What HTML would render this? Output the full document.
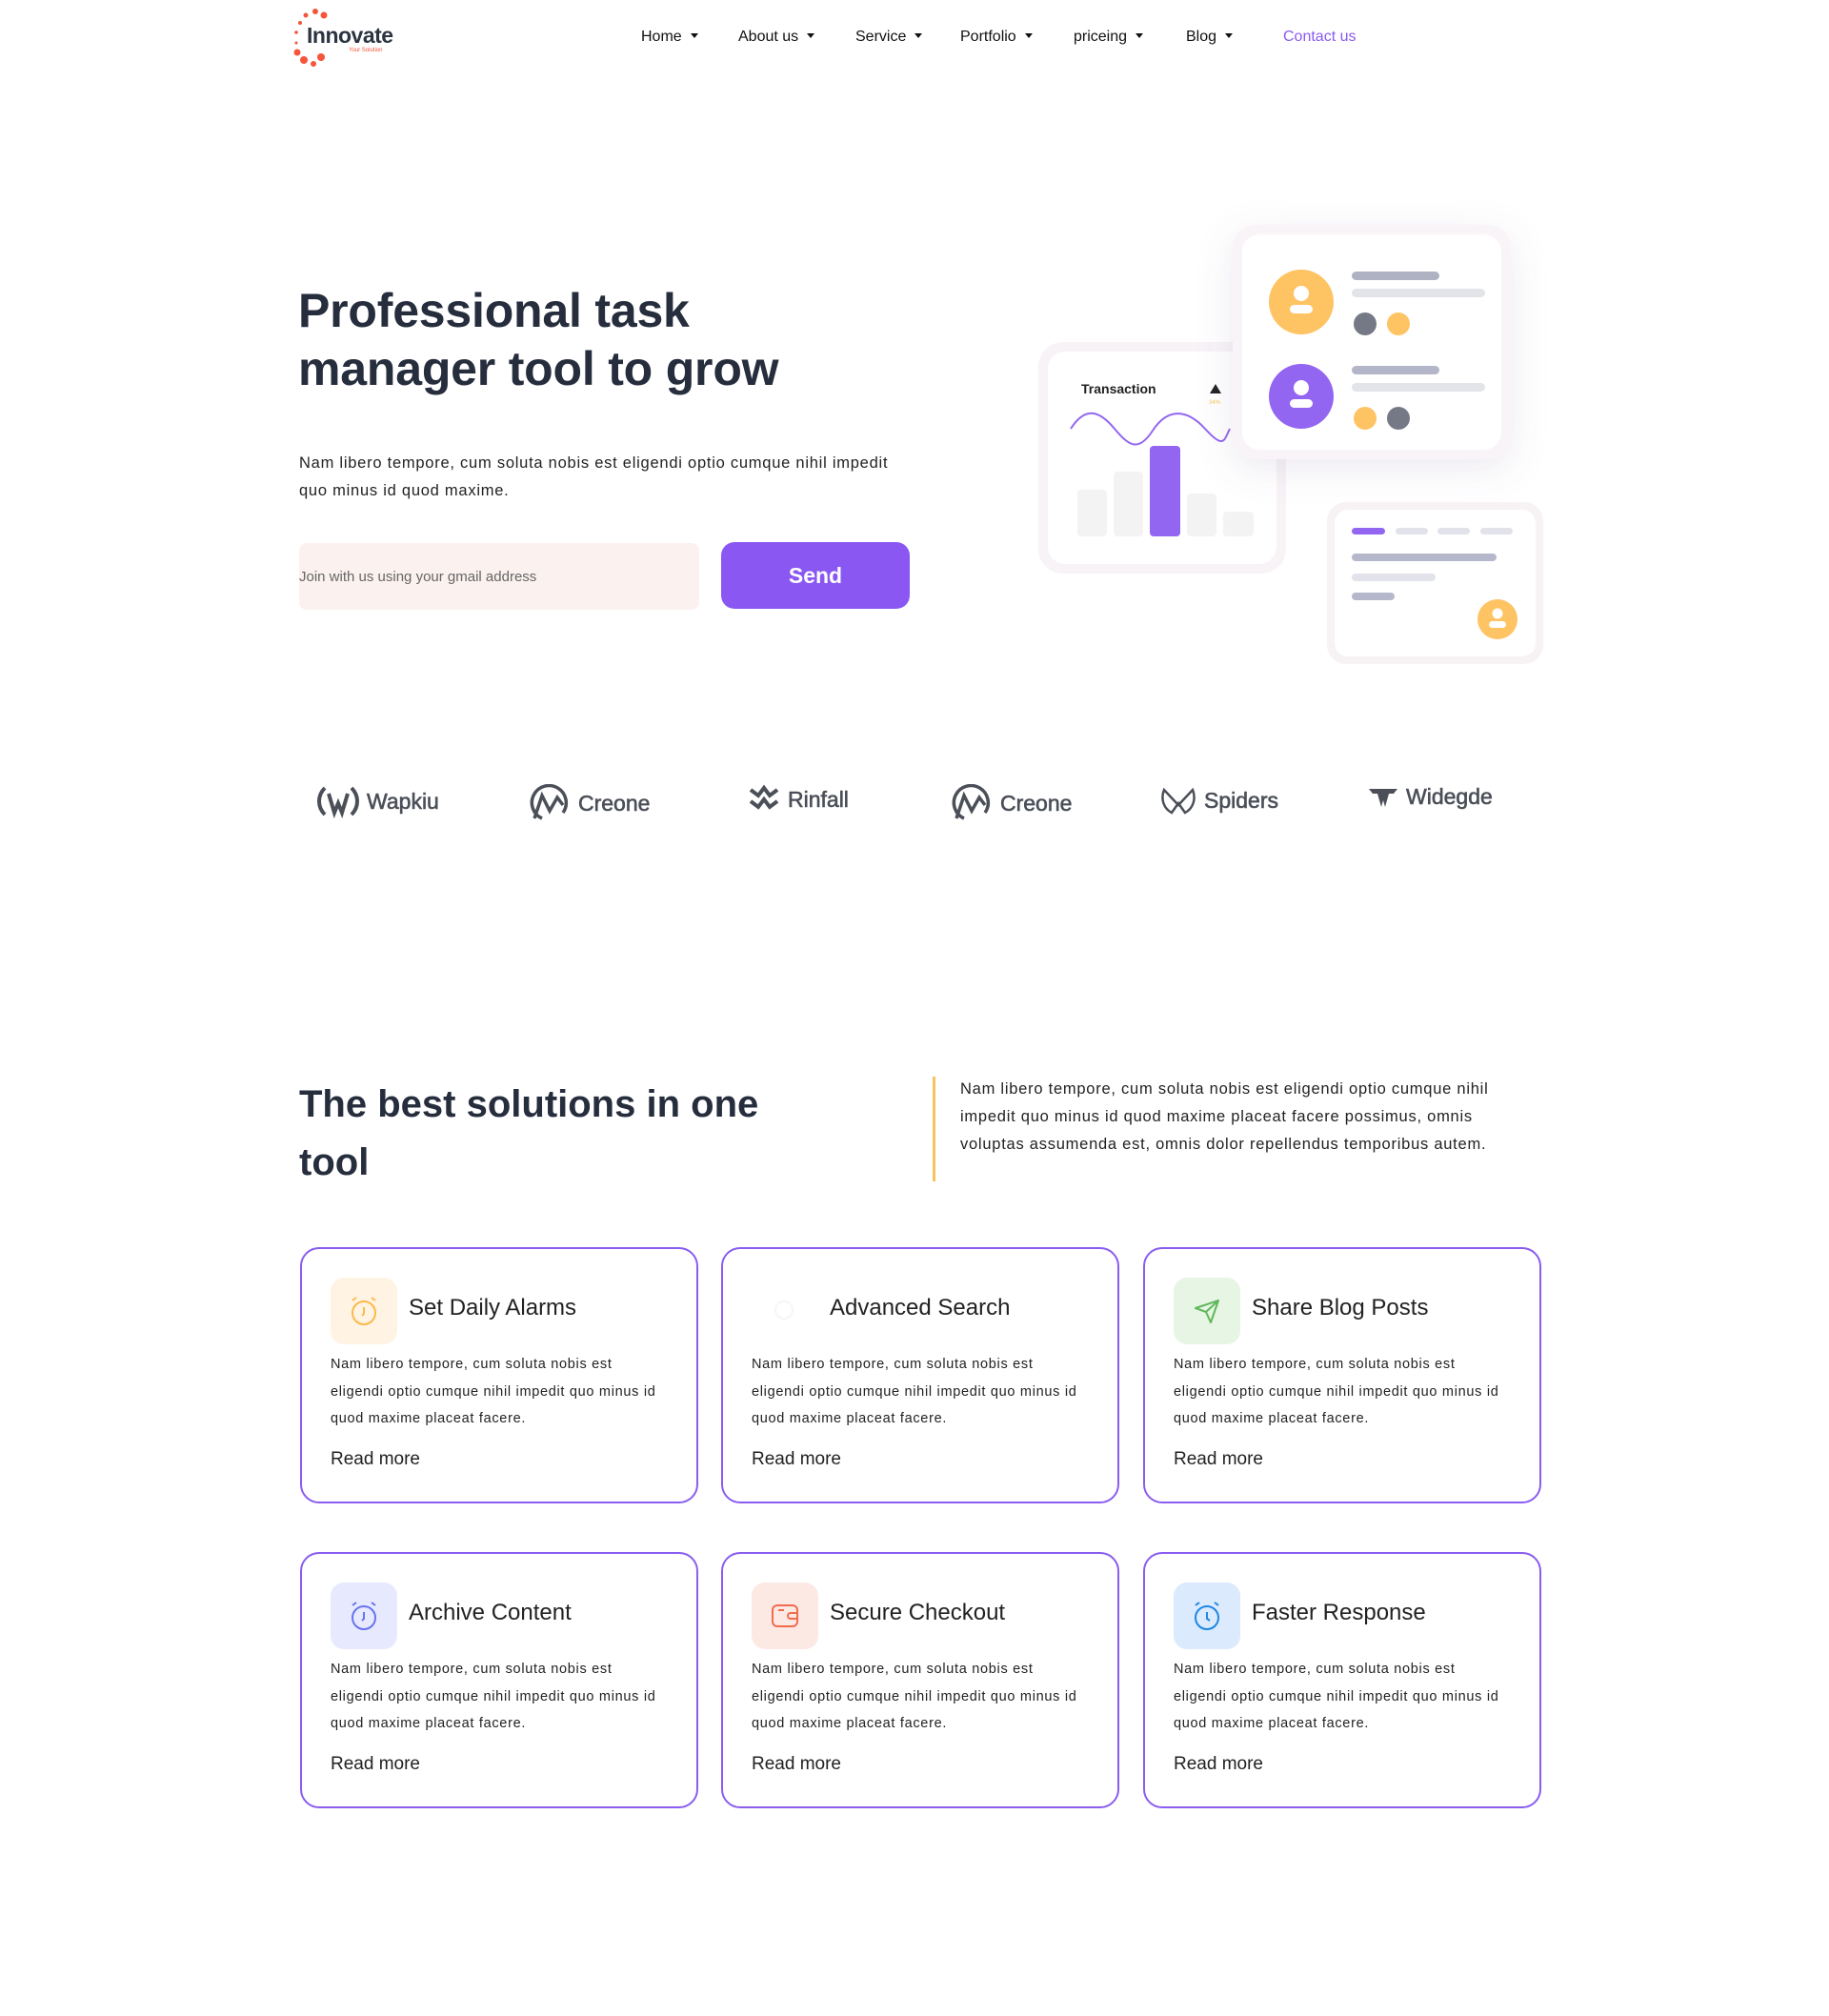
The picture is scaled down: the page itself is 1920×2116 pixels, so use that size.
<!DOCTYPE html>
<html><head><meta charset="utf-8"><style>
*{margin:0;padding:0;box-sizing:border-box}
body{width:1920px;height:2116px;background:#fff;font-family:"Liberation Sans",sans-serif;color:#262d3d;position:relative;overflow:hidden}
.a{position:absolute}
.nav{top:30px;font-size:16px;color:#111;white-space:nowrap}
.nav i{display:inline-block;width:0;height:0;border-left:4px solid transparent;border-right:4px solid transparent;border-top:5px solid #111;margin-left:9px;vertical-align:3px}
h1{position:absolute;left:313px;top:296px;font-size:50px;line-height:61px;font-weight:700;color:#262d3d;letter-spacing:-0.2px}
.p{font-size:16.5px;line-height:29px;color:#222;white-space:nowrap;letter-spacing:0.75px}
.card{position:absolute;width:418px;height:269px;border:2px solid #8a5cf0;border-radius:20px}
.ic{position:absolute;left:30px;top:30px;width:70px;height:70px;border-radius:14px;display:flex;align-items:center;justify-content:center}
.ct{position:absolute;left:112px;top:48px;font-size:24px;color:#222;white-space:nowrap}
.cp{position:absolute;left:30px;top:107px;font-size:14.5px;line-height:28.5px;color:#222;white-space:nowrap;letter-spacing:0.7px}
.rm{position:absolute;left:30px;top:210px;font-size:19px;color:#222}
.lg{position:absolute;top:823px;display:flex;align-items:center;gap:8px;font-size:23px;font-weight:400;-webkit-text-stroke:0.6px #4b4f58;color:#4b4f58}
</style></head><body>
<svg class="a" style="left:303px;top:5px" width="70" height="68" viewBox="0 0 70 68">
<g fill="#f4553b"><circle cx="28" cy="7" r="3"/><circle cx="37" cy="11" r="3.5"/><circle cx="18" cy="11" r="2.5"/><circle cx="12" cy="19" r="2"/><circle cx="8" cy="29" r="1.8"/><circle cx="9" cy="50" r="3.5"/><circle cx="16" cy="58" r="4"/><circle cx="26" cy="62" r="3"/><circle cx="34" cy="55" r="4"/><circle cx="8" cy="40" r="1.5"/></g></svg>
<div class="a" style="left:322px;top:24px;font-size:23px;font-weight:700;color:#2c3442;letter-spacing:-0.5px">Innovate</div>
<div class="a" style="left:366px;top:50px;font-size:6px;color:#f4553b">Your Solution</div>
<div class="a nav" style="left:673px">Home<i></i></div>
<div class="a nav" style="left:775px">About us<i></i></div>
<div class="a nav" style="left:898px">Service<i></i></div>
<div class="a nav" style="left:1008px">Portfolio<i></i></div>
<div class="a nav" style="left:1127px">priceing<i></i></div>
<div class="a nav" style="left:1245px">Blog<i></i></div>
<div class="a nav" style="left:1347px;color:#8a5cf0">Contact us</div>

<h1>Professional task<br>manager tool to grow</h1>
<div class="a p" style="left:314px;top:472px">Nam libero tempore, cum soluta nobis est eligendi optio cumque nihil impedit<br>quo minus id quod maxime.</div>
<div class="a" style="left:314px;top:570px;width:420px;height:70px;background:#fbf1ef;border-radius:8px"></div>
<div class="a" style="left:314px;top:597px;font-size:15px;color:#666">Join with us using your gmail address</div>
<div class="a" style="left:757px;top:569px;width:198px;height:70px;background:#8a57f3;border-radius:14px;color:#fff;font-size:23px;font-weight:700;display:flex;align-items:center;justify-content:center">Send</div>

<svg class="a" style="left:1060px;top:200px" width="600" height="520" viewBox="0 0 600 520">
<defs><filter id="sh" x="-30%" y="-30%" width="160%" height="160%"><feDropShadow dx="0" dy="10" stdDeviation="18" flood-color="#7a6a90" flood-opacity="0.14"/></filter></defs>
<rect x="30" y="159" width="260" height="243" rx="26" fill="#f7f3f7"/>
<rect x="40" y="169" width="240" height="223" rx="18" fill="#fff"/>
<text x="75" y="213" font-size="14" font-family="Liberation Sans" font-weight="700" fill="#222">Transaction</text>
<path d="M210 213 l6 -10 l6 10z" fill="#222"/>
<text x="209" y="224" font-size="6" fill="#f7c35a" font-family="Liberation Sans">34%</text>
<path d="M64 250 C80 225 95 232 110 250 S135 275 150 252 S185 228 205 250 S225 262 231 250" stroke="#9366f2" stroke-width="2" fill="none"/>
<g fill="#f3f3f3"><rect x="71" y="314" width="31" height="49" rx="4"/><rect x="109" y="295" width="31" height="68" rx="4"/><rect x="186" y="318" width="31" height="45" rx="4"/><rect x="224" y="337" width="32" height="26" rx="4"/></g>
<rect x="147" y="268" width="32" height="95" rx="4" fill="#9366f2"/>
<g filter="url(#sh)"><rect x="234" y="36" width="292" height="246" rx="24" fill="#f8f4f8"/></g>
<rect x="244" y="46" width="272" height="226" rx="18" fill="#fff"/>
<circle cx="306" cy="117" r="34" fill="#fec362"/><circle cx="306" cy="108" r="8" fill="#fff"/><rect x="294" y="120" width="24" height="9" rx="4.5" fill="#fff"/>
<circle cx="306" cy="216" r="34" fill="#9366f2"/><circle cx="306" cy="207" r="8" fill="#fff"/><rect x="294" y="219" width="24" height="9" rx="4.5" fill="#fff"/>
<rect x="359" y="85" width="92" height="9" rx="4.5" fill="#aeb2c2"/><rect x="359" y="103" width="140" height="9" rx="4.5" fill="#e2e4ea"/>
<circle cx="373" cy="140" r="12" fill="#757986"/><circle cx="408" cy="140" r="12" fill="#fec362"/>
<rect x="359" y="184" width="92" height="9" rx="4.5" fill="#b3b6c8"/><rect x="359" y="202" width="140" height="9" rx="4.5" fill="#e2e4ea"/>
<circle cx="373" cy="239" r="12" fill="#fec362"/><circle cx="408" cy="239" r="12" fill="#757986"/>
<rect x="333" y="327" width="227" height="170" rx="20" fill="#f7f2f4"/>
<rect x="341" y="335" width="211" height="154" rx="14" fill="#fff"/>
<rect x="359" y="354" width="35" height="7" rx="3.5" fill="#9366f2"/><g fill="#e2e3ea"><rect x="405" y="354" width="34" height="7" rx="3.5"/><rect x="449" y="354" width="34" height="7" rx="3.5"/><rect x="494" y="354" width="34" height="7" rx="3.5"/></g>
<rect x="359" y="381" width="152" height="8" rx="4" fill="#b5b8cb"/><rect x="359" y="402" width="88" height="8" rx="4" fill="#e2e3ea"/><rect x="359" y="422" width="45" height="8" rx="4" fill="#b5b8cb"/>
<circle cx="512" cy="450" r="21" fill="#fec362"/><circle cx="512" cy="444" r="5.5" fill="#fff"/><rect x="503" y="452" width="18" height="7" rx="3.5" fill="#fff"/>
</svg>

<div class="lg" style="left:333px"><svg width="44" height="36" viewBox="0 0 44 36" fill="none" stroke="#4b4f58" stroke-width="4"><path d="M8 4 C0 12 0 24 8 32 M36 4 C44 12 44 24 36 32 M12 10 L18 30 L22 20 L26 30 L32 10"/></svg>Wapkiu</div>
<div class="lg" style="left:555px"><svg width="44" height="40" viewBox="0 0 44 40" fill="none" stroke="#4b4f58" stroke-width="3.5"><path d="M14 36 A18 18 0 1 1 36 30"/><path d="M6 36 L14 12 L22 28 L30 14 L36 22"/></svg>Creone</div>
<div class="lg" style="left:785px"><svg width="34" height="32" viewBox="0 0 34 32" fill="none" stroke="#4b4f58" stroke-width="4"><path d="M3 6 L11 12 L17 4 L23 12 L31 6 M3 18 L11 24 L17 16 L23 24 L31 18"/></svg>Rinfall</div>
<div class="lg" style="left:998px"><svg width="44" height="40" viewBox="0 0 44 40" fill="none" stroke="#4b4f58" stroke-width="3.5"><path d="M14 36 A18 18 0 1 1 36 30"/><path d="M6 36 L14 12 L22 28 L30 14 L36 22"/></svg>Creone</div>
<div class="lg" style="left:1218px"><svg width="38" height="34" viewBox="0 0 38 34" fill="none" stroke="#4b4f58" stroke-width="2.5"><path d="M4 6 C0 16 4 26 12 30 L19 20 L26 30 C34 26 38 16 34 6 L19 22 Z"/></svg>Spiders</div>
<div class="lg" style="left:1436px"><svg width="32" height="24" viewBox="0 0 32 24" fill="#4b4f58"><path d="M1 3 H31 L27 8 H22 L18 22 L16 15 L14 22 L10 8 H5Z"/></svg>Widegde</div>

<div class="a" style="left:314px;top:1129px;font-size:40px;line-height:61px;font-weight:700;color:#262d3d;width:520px">The best solutions in one tool</div>
<div class="a" style="left:979px;top:1130px;width:3px;height:110px;background:#f7c35a"></div>
<div class="a p" style="left:1008px;top:1129px">Nam libero tempore, cum soluta nobis est eligendi optio cumque nihil<br>impedit quo minus id quod maxime placeat facere possimus, omnis<br>voluptas assumenda est, omnis dolor repellendus temporibus autem.</div>

<div class="card" style="left:315px;top:1309px"><div class="ic" style="background:#fff4e3"><svg width="34" height="34" viewBox="0 0 34 34" fill="none" stroke="#fbb94a" stroke-width="2"><circle cx="17" cy="19" r="12"/><path d="M17 13v7l-2 2M5 6l4-3M29 6l-4-3"/></svg></div><div class="ct">Set Daily Alarms</div><div class="cp">Nam libero tempore, cum soluta nobis est<br>eligendi optio cumque nihil impedit quo minus id<br>quod maxime placeat facere.</div><div class="rm">Read more</div></div>
<div class="card" style="left:757px;top:1309px"><div class="ic" style="background:#fff"><svg width="30" height="30" viewBox="0 0 30 30" fill="none" stroke="#f6f6f8" stroke-width="2"><circle cx="14" cy="14" r="9"/></svg></div><div class="ct">Advanced Search</div><div class="cp">Nam libero tempore, cum soluta nobis est<br>eligendi optio cumque nihil impedit quo minus id<br>quod maxime placeat facere.</div><div class="rm">Read more</div></div>
<div class="card" style="left:1200px;top:1309px"><div class="ic" style="background:#e7f5e4"><svg width="30" height="30" viewBox="0 0 30 30" fill="none" stroke="#5fb85a" stroke-width="2" stroke-linejoin="round"><path d="M3 12 L27 4 L19 27 L14 16 Z M14 16 L27 4"/></svg></div><div class="ct">Share Blog Posts</div><div class="cp">Nam libero tempore, cum soluta nobis est<br>eligendi optio cumque nihil impedit quo minus id<br>quod maxime placeat facere.</div><div class="rm">Read more</div></div>
<div class="card" style="left:315px;top:1629px"><div class="ic" style="background:#e7eaff"><svg width="34" height="34" viewBox="0 0 34 34" fill="none" stroke="#6874f0" stroke-width="2"><circle cx="17" cy="19" r="12"/><path d="M17 13v7l-2 2M5 6l4-3M29 6l-4-3"/></svg></div><div class="ct">Archive Content</div><div class="cp">Nam libero tempore, cum soluta nobis est<br>eligendi optio cumque nihil impedit quo minus id<br>quod maxime placeat facere.</div><div class="rm">Read more</div></div>
<div class="card" style="left:757px;top:1629px"><div class="ic" style="background:#fde9e4"><svg width="34" height="34" viewBox="0 0 34 34" fill="none" stroke="#f26b4f" stroke-width="2"><rect x="4" y="6" width="26" height="22" rx="5"/><path d="M30 14h-7a3 3 0 0 0 0 6h7M10 11h6"/></svg></div><div class="ct">Secure Checkout</div><div class="cp">Nam libero tempore, cum soluta nobis est<br>eligendi optio cumque nihil impedit quo minus id<br>quod maxime placeat facere.</div><div class="rm">Read more</div></div>
<div class="card" style="left:1200px;top:1629px"><div class="ic" style="background:#dbeafd"><svg width="34" height="34" viewBox="0 0 34 34" fill="none" stroke="#1e88e5" stroke-width="2"><circle cx="17" cy="19" r="12"/><path d="M17 13v7l3 2M5 6l4-3M29 6l-4-3"/></svg></div><div class="ct">Faster Response</div><div class="cp">Nam libero tempore, cum soluta nobis est<br>eligendi optio cumque nihil impedit quo minus id<br>quod maxime placeat facere.</div><div class="rm">Read more</div></div>
</body></html>
